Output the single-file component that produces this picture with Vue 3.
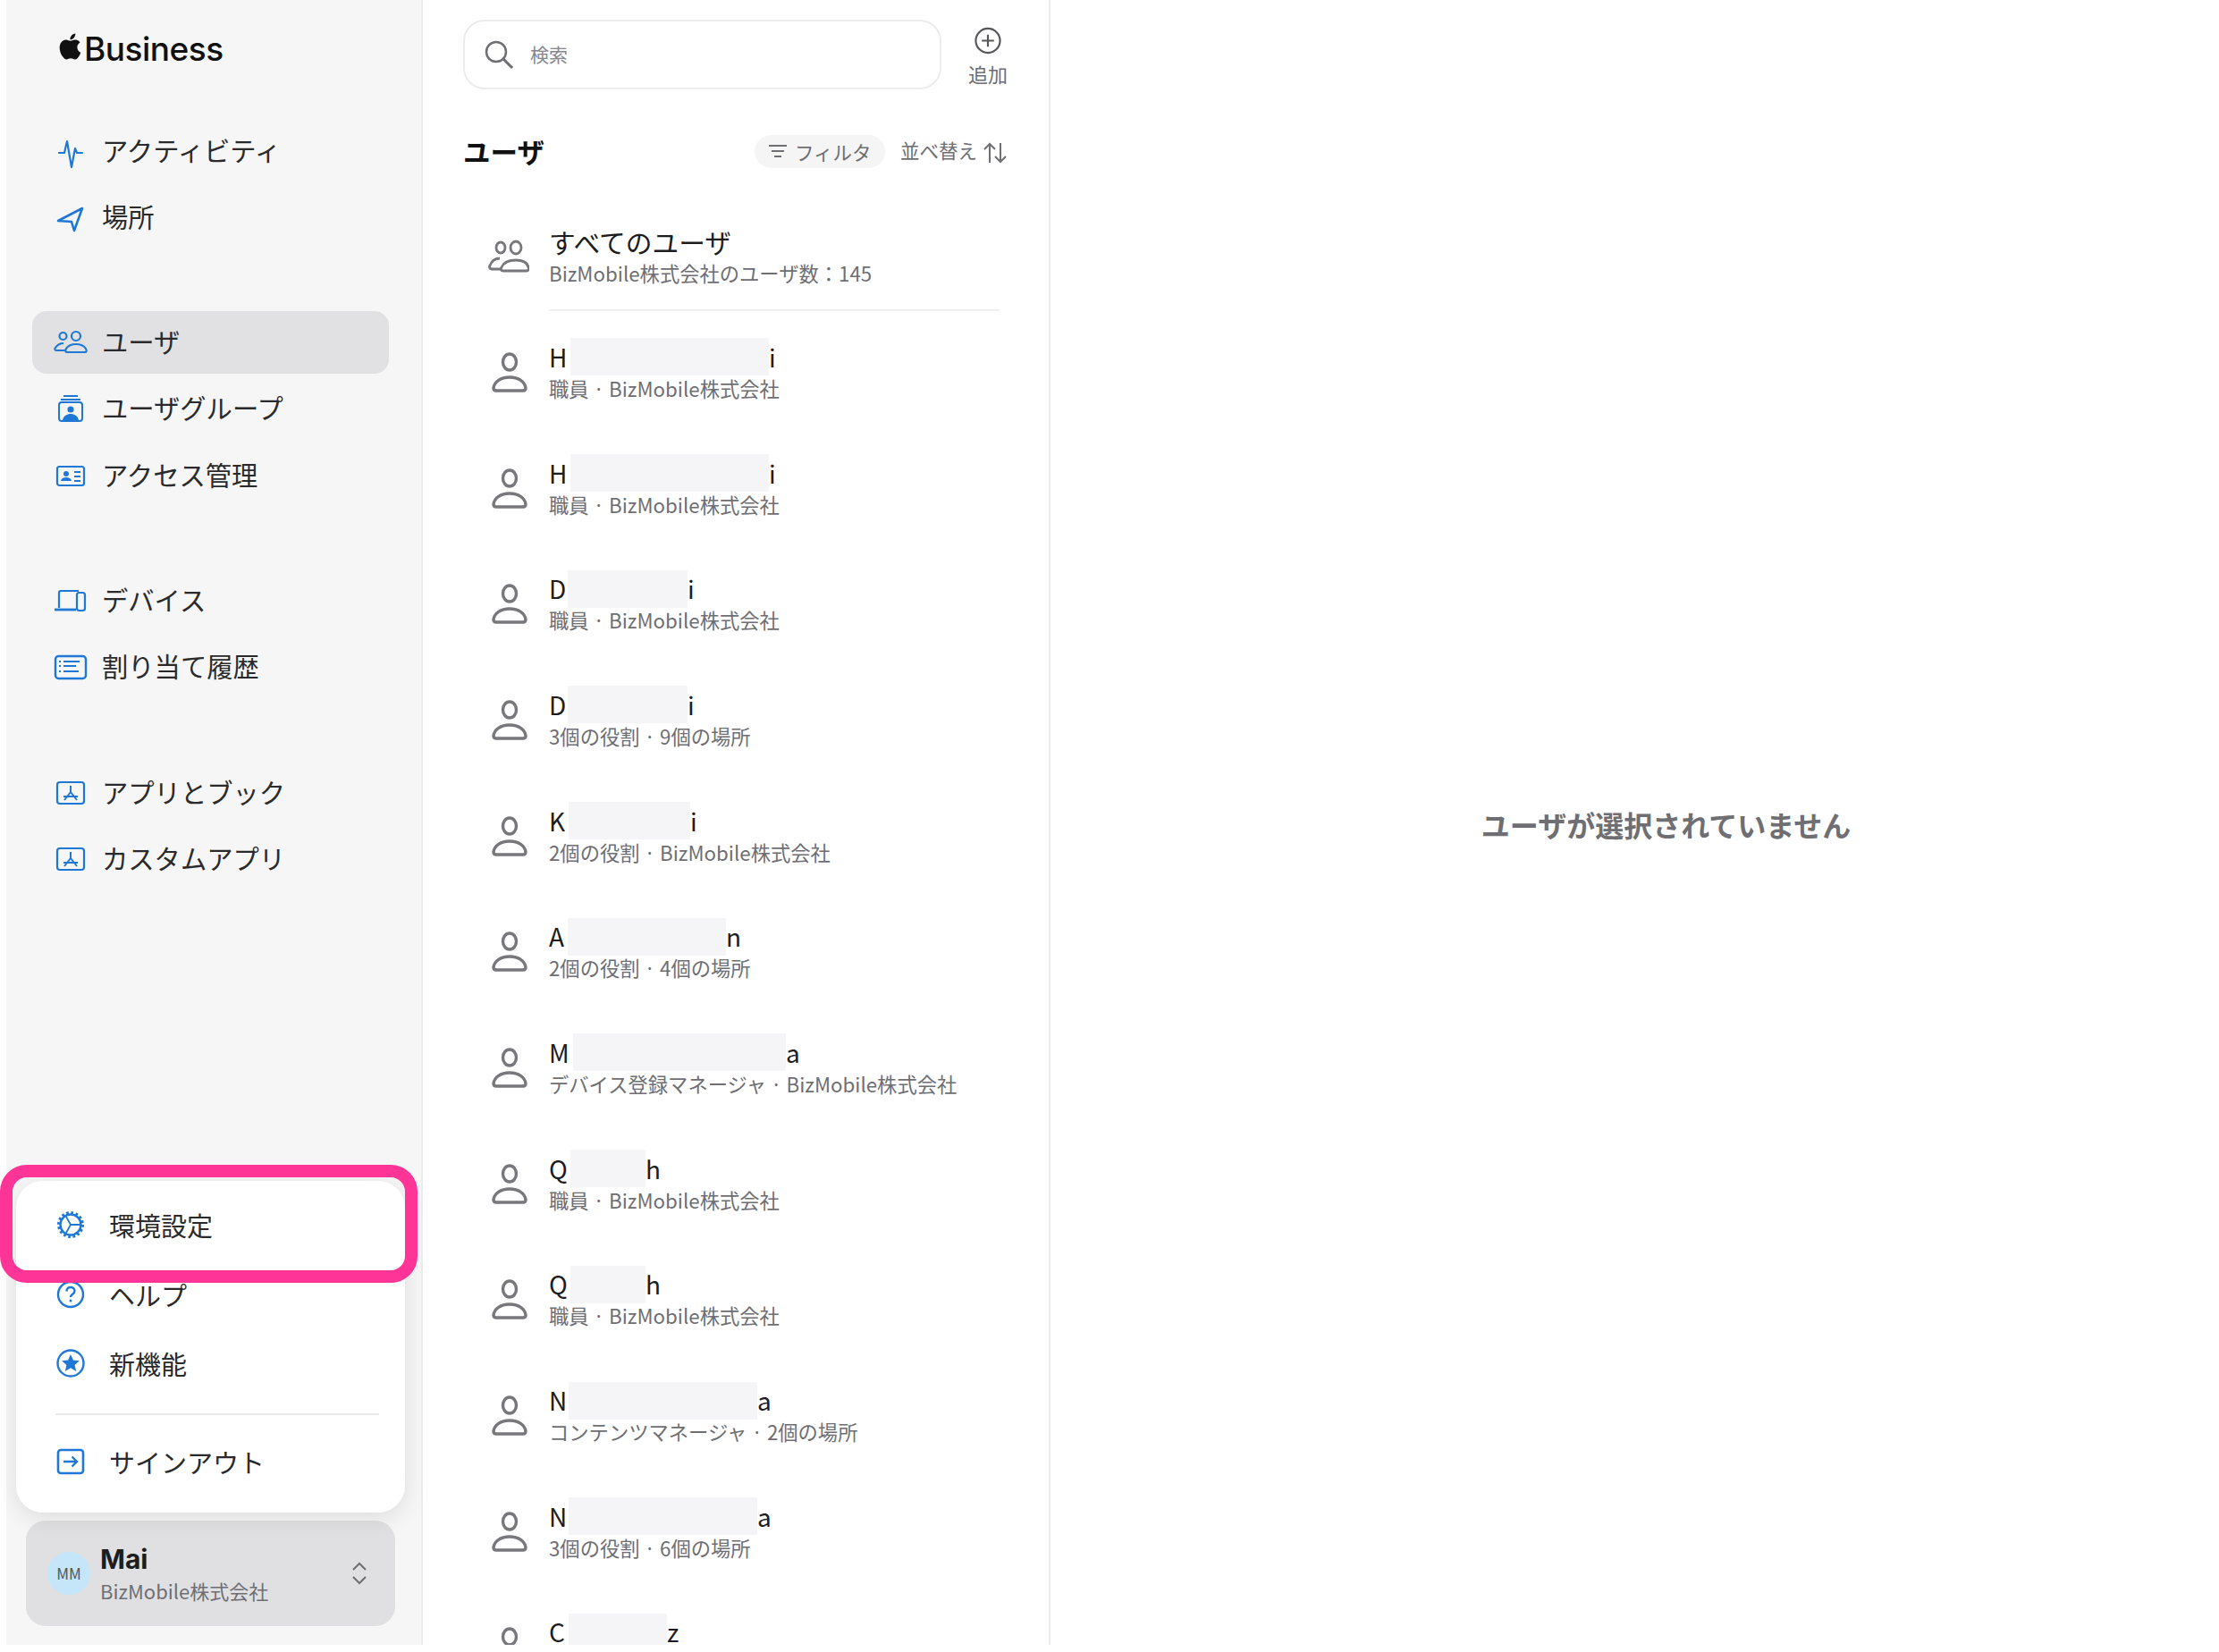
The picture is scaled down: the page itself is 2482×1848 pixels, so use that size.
<script setup>
const groups = [
  [{ t: 'アクティビティ', i: 'activity' }, { t: '場所', i: 'location' }],
  [{ t: 'ユーザ', i: 'users', active: true }, { t: 'ユーザグループ', i: 'group' }, { t: 'アクセス管理', i: 'id' }],
  [{ t: 'デバイス', i: 'device' }, { t: '割り当て履歴', i: 'list' }],
  [{ t: 'アプリとブック', i: 'app' }, { t: 'カスタムアプリ', i: 'app' }],
]
const icons = {
  activity: '<path d="M7 22h6l3-13 5 29 4-21 2 5h6" fill="none" stroke="#1f78d6" stroke-width="2.200" stroke-linejoin="round" stroke-linecap="round"/>',
  location: '<path d="M6 24 33 10 24 35 21 25Z" fill="none" stroke="#1f78d6" stroke-width="2.600" stroke-linejoin="round"/>',
  users: '<g fill="none" stroke="#1f78d6" stroke-width="2.200"><circle cx="11.500" cy="13" r="4"/><circle cx="26" cy="13" r="5"/><path d="M14 29H4c-2 0-2-2-1-3 2-3 5-5 9-5"/><path d="M16 31c-2 0-2-2-1-4 2-3 6-5 11-5s9 2 11 5c1 2 1 4-1 4Z"/></g>',
  group: '<g fill="none" stroke="#1f78d6" stroke-width="2"><path d="M12 6h16M9 10h22"/><rect x="7" y="13" width="26" height="21" rx="3"/></g><circle cx="20" cy="21" r="3.600" fill="#1f78d6"/><path d="M11 33c1-5 5-7 9-7s8 2 9 7Z" fill="#1f78d6"/>',
  id: '<rect x="5" y="10" width="30" height="21" rx="2.500" fill="none" stroke="#1f78d6" stroke-width="2.200"/><circle cx="15" cy="18" r="3" fill="#1f78d6"/><path d="M9 26c.5-3 3-4 6-4s5.500 1 6 4Z" fill="#1f78d6"/><path d="M24 16h7M24 21h7M24 26h7" stroke="#1f78d6" stroke-width="1.800"/>',
  device: '<g fill="none" stroke="#1f78d6" stroke-width="2.200"><path d="M7 28V11c0-1 1-2 2-2h20"/><path d="M2 30h24" stroke-width="2.800"/><rect x="27" y="11" width="9" height="20" rx="2.500"/></g>',
  list: '<rect x="3" y="8" width="34" height="25" rx="3.500" fill="none" stroke="#1f78d6" stroke-width="2.400"/><path d="M7 14h2M7 19h2M7 25h2M12 14h18M12 19h14M12 25h17" stroke="#1f78d6" stroke-width="2.200"/>',
  app: '<rect x="5" y="8" width="30" height="24" rx="3" fill="none" stroke="#1f78d6" stroke-width="2.200"/><path d="M20 12v7M20 19l-7 9M20 19l7 9M12 24h16" stroke="#1f78d6" stroke-width="2" fill="none"/>',
  gear: '<circle cx="20" cy="20" r="11.500" fill="none" stroke="#1f78d6" stroke-width="2.400"/><circle cx="20" cy="20" r="13.500" fill="none" stroke="#1f78d6" stroke-width="3" stroke-dasharray="2.700 2.600"/><path d="M15 11l5 9-5 9M20 20h11" fill="none" stroke="#1f78d6" stroke-width="1.800"/>',
  help: '<circle cx="20" cy="20" r="14" fill="none" stroke="#1f78d6" stroke-width="2.400"/><path d="M15.500 16.500c0-3 2-4.500 4.500-4.500s4.500 1.500 4.500 4c0 4-4.500 3.500-4.500 7" fill="none" stroke="#1f78d6" stroke-width="2.400"/><circle cx="20" cy="27" r="1.500" fill="#1f78d6"/>',
  star: '<circle cx="20" cy="20" r="14.500" fill="none" stroke="#1f78d6" stroke-width="2.400"/><path d="m20 10 2.900 6.500 7 .7-5.300 4.700 1.600 7L20 25.200l-6.200 3.700 1.600-7-5.300-4.700 7-.7Z" fill="#1f78d6"/>',
  signout: '<rect x="6" y="7" width="28" height="26" rx="3" fill="none" stroke="#1f78d6" stroke-width="2.600"/><path d="M12 20h15M21.500 14.500 27 20l-5.500 5.500" fill="none" stroke="#1f78d6" stroke-width="2.400"/>',
}
const menu = [
  { t: '環境設定', i: 'gear' },
  { t: 'ヘルプ', i: 'help' },
  { t: '新機能', i: 'star' },
]
const users = [
  { a: 'H', z: 'i', l: 24, w: 222, s: '職員 · BizMobile株式会社' },
  { a: 'H', z: 'i', l: 24, w: 222, s: '職員 · BizMobile株式会社' },
  { a: 'D', z: 'i', l: 21, w: 134, s: '職員 · BizMobile株式会社' },
  { a: 'D', z: 'i', l: 21, w: 134, s: '3個の役割 · 9個の場所' },
  { a: 'K', z: 'i', l: 22, w: 136, s: '2個の役割 · BizMobile株式会社' },
  { a: 'A', z: 'n', l: 21, w: 177, s: '2個の役割 · 4個の場所' },
  { a: 'M', z: 'a', l: 27, w: 238, s: 'デバイス登録マネージャ · BizMobile株式会社' },
  { a: 'Q', z: 'h', l: 24, w: 84, s: '職員 · BizMobile株式会社' },
  { a: 'Q', z: 'h', l: 24, w: 84, s: '職員 · BizMobile株式会社' },
  { a: 'N', z: 'a', l: 22, w: 211, s: 'コンテンツマネージャ · 2個の場所' },
  { a: 'N', z: 'a', l: 22, w: 211, s: '3個の役割 · 6個の場所' },
  { a: 'C', z: 'z', l: 22, w: 110, s: '' },
]
</script>

<template>
  <div class="app">
    <aside class="side">
      <div class="brand">
        <svg class="apple" viewBox="0 0 24 24"><path d="M12.152 6.896c-.948 0-2.415-1.078-3.960-1.040-2.040.027-3.910 1.183-4.961 3.014-2.117 3.675-.546 9.103 1.519 12.090 1.013 1.454 2.208 3.090 3.792 3.039 1.520-.065 2.090-.987 3.935-.987 1.831 0 2.350.987 3.960.948 1.637-.026 2.676-1.480 3.676-2.948 1.156-1.688 1.636-3.325 1.662-3.415-.039-.013-3.182-1.221-3.220-4.857-.026-3.040 2.480-4.494 2.597-4.559-1.429-2.090-3.623-2.324-4.390-2.376-2-.156-3.675 1.090-4.610 1.090zM15.530 3.830c.843-1.012 1.400-2.427 1.245-3.830-1.207.052-2.662.805-3.532 1.818-.780.896-1.454 2.338-1.273 3.714 1.338.104 2.715-.688 3.559-1.701"/></svg>
        <span>Business</span>
      </div>
      <nav v-for="(g, gi) in groups" :key="gi" class="group">
        <div v-for="it in g" :key="it.t" class="item" :class="{ active: it.active }">
          <svg class="ic" viewBox="0 0 40 40" v-html="icons[it.i]"></svg>
          <span>{{ it.t }}</span>
        </div>
      </nav>

      <div class="bottom">
        <div class="menu">
          <div v-for="m in menu" :key="m.t" class="mrow">
            <svg class="ic" viewBox="0 0 40 40" v-html="icons[m.i]"></svg>
            <span>{{ m.t }}</span>
          </div>
          <div class="mdiv"></div>
          <div class="mrow last">
            <svg class="ic" viewBox="0 0 40 40" v-html="icons.signout"></svg>
            <span>サインアウト</span>
          </div>
          <div class="pink"></div>
        </div>
        <div class="account">
          <div class="avatar">MM</div>
          <div class="who">
            <div class="mai">Mai</div>
            <div class="org">BizMobile株式会社</div>
          </div>
          <svg class="updown" viewBox="0 0 20 30"><path d="M3 11 10 4l7 7M3 19l7 7 7-7" fill="none" stroke="#6e6e73" stroke-width="2"/></svg>
        </div>
      </div>
    </aside>

    <section class="list">
      <div class="top">
        <div class="search">
          <svg class="sicon" viewBox="0 0 34 34"><circle cx="14" cy="14" r="11" fill="none" stroke="#6e6e73" stroke-width="2.500"/><path d="m22 22 10 10" stroke="#6e6e73" stroke-width="3"/></svg>
          <span>検索</span>
        </div>
        <div class="add">
          <svg viewBox="0 0 32 32"><circle cx="16" cy="16" r="14" fill="none" stroke="#55555a" stroke-width="2.200"/><path d="M16 9v14M9 16h14" stroke="#55555a" stroke-width="2.200"/></svg>
          <span>追加</span>
        </div>
      </div>
      <div class="head">
        <h2>ユーザ</h2>
        <div class="pill">
          <svg viewBox="0 0 24 20"><path d="M2 4h20M5 10h14M8 16h8" stroke="#6e6e73" stroke-width="2"/></svg>
          <span>フィルタ</span>
        </div>
        <div class="sort">
          <span>並べ替え</span>
          <svg viewBox="0 0 28 26"><path d="M8 24V3M2 9l6-6 6 6M20 2v21M14 17l6 6 6-6" fill="none" stroke="#6e6e73" stroke-width="2"/></svg>
        </div>
      </div>
      <div class="urow all">
        <svg class="uic" viewBox="0 0 46 46"><g fill="none" stroke="#77777c" stroke-width="2.800"><ellipse cx="14" cy="12" rx="5" ry="6"/><ellipse cx="31" cy="12" rx="6" ry="7"/><path d="M14 36H4c-2 0-3-2-2-4 2-5 6-8 11-8"/><path d="M17 38c-3 0-3-2-2-4 2-5 8-8 16-8s13 3 14 8c1 2 0 4-2 4Z"/></g></svg>
        <div class="txt">
          <div class="title">すべてのユーザ</div>
          <div class="sub">BizMobile株式会社のユーザ数：145</div>
        </div>
      </div>
      <div class="rows">
        <div v-for="(u, i) in users" :key="i" class="urow">
          <svg class="uic" viewBox="0 0 46 46"><g fill="none" stroke="#77777c" stroke-width="3.400"><ellipse cx="24" cy="11" rx="7.500" ry="9"/><path d="M9 43c-2 0-3-1-3-3 1-7 8-12 18-12s17 5 18 12c0 2-1 3-3 3Z"/></g></svg>
          <div class="txt">
            <div class="name">
              <span class="first" :style="{ width: u.l + 'px' }">{{ u.a }}</span>
              <span class="mask" :style="{ width: u.w + 'px' }"></span>
              <span>{{ u.z }}</span>
            </div>
            <div class="sub">{{ u.s }}</div>
          </div>
        </div>
      </div>
    </section>

    <main class="detail">ユーザが選択されていません</main>
  </div>
</template>

<style>
html, body { background: #fff; overflow: hidden; }
</style>

<style scoped>
.app {
  display: flex;
  width: 2482px;
  height: 1840px;
  padding-left: 7px;
  box-sizing: border-box;
  font-family: "Noto Sans CJK JP", "Noto Sans", sans-serif;
  color: #1d1d1f;
  background: #fff;
}
.side {
  width: 466px;
  flex: none;
  box-sizing: border-box;
  background: #f6f6f6;
  border-right: 2px solid #ececee;
  display: flex;
  flex-direction: column;
  padding: 0 0 21.500px;
}
.brand {
  display: flex;
  align-items: center;
  height: 108px;
  padding-left: 57px;
  font-family: Inter, sans-serif;
  font-weight: 500;
  font-size: 37px;
  letter-spacing: -.5px;
  color: #111;
}
.apple { width: 29px; height: 32px; margin-right: 1px; fill: #111; margin-top: -5px; }
.group {
  display: flex;
  flex-direction: column;
  gap: 4.300px;
  margin: 0 0 70.300px 29px;
  width: 399px;
}
.group:first-of-type { margin-top: 25.500px; }
.item {
  height: 70px;
  display: flex;
  align-items: center;
  padding-left: 23px;
  gap: 15px;
  font-size: 29.300px;
  border-radius: 16px;
  color: #2a2a2c;
}
.item > span { margin-top: -4px; }
.item.active { background: #e1e1e3; }
.ic { width: 40px; height: 40px; flex: none; }
.bottom { margin-top: auto; }
.menu {
  position: relative;
  margin-left: 11px;
  width: 435px;
  height: 371px;
  box-sizing: border-box;
  padding-top: 11px;
  background: #fff;
  border-radius: 30px;
  box-shadow: 0 6px 26px rgba(0, 0, 0, .1);
}
.mrow {
  height: 77.500px;
  display: flex;
  align-items: center;
  padding-left: 41px;
  gap: 23px;
  font-size: 29px;
  color: #2a2a2c;
}
.mdiv { height: 2px; background: #e9e9eb; margin: 17px 29px 17px 44px; }
.mrow.last { height: 70px; }
.pink {
  position: absolute;
  left: -18px;
  top: -18px;
  width: 467px;
  height: 132px;
  box-sizing: border-box;
  border: 14px solid #fe3596;
  border-radius: 30px;
}
.account {
  margin: 9px 0 0 22px;
  width: 413px;
  height: 118px;
  box-sizing: border-box;
  border-radius: 22px;
  background: #e0e0e2;
  display: flex;
  align-items: center;
  padding: 0 30px 0 24px;
}
.avatar {
  width: 48px;
  height: 48px;
  border-radius: 50%;
  background: #c5e6f9;
  color: #55555a;
  font-size: 17px;
  line-height: 48px;
  text-align: center;
  flex: none;
}
.who { margin-left: 11px; flex: 1; padding-top: 2px; }
.mai { font-size: 30px; font-weight: 700; line-height: 36px; font-family: Inter, sans-serif; }
.org { font-size: 22px; line-height: 34px; color: #6e6e73; }
.updown { width: 20px; height: 30px; }

.list {
  width: 702px;
  flex: none;
  box-sizing: border-box;
  border-right: 2px solid #ececee;
  padding-top: 22px;
  overflow: hidden;
}
.top { display: flex; margin-left: 45px; height: 78px; }
.search {
  width: 535px;
  height: 78px;
  box-sizing: border-box;
  border: 2px solid #ececee;
  border-radius: 24px;
  display: flex;
  align-items: center;
  padding-left: 21px;
  font-size: 21px;
  color: #86868b;
  gap: 18px;
}
.search span { margin-top: -3px; }
.add {
  width: 104px;
  display: flex;
  flex-direction: column;
  align-items: center;
  font-size: 22px;
  line-height: 36px;
  color: #6e6e73;
}
.add svg { width: 32px; height: 32px; margin: 8px 0 3px; }
.sicon { width: 34px; height: 34px; }
.head {
  display: flex;
  align-items: center;
  margin: 50px 0 0 45px;
  height: 38px;
  width: 609px;
}
.head h2 { margin: 0 auto 0 0; font-size: 30.500px; font-weight: 700; color: #111; }
.pill {
  width: 146px;
  height: 37px;
  box-sizing: border-box;
  border-radius: 19px;
  background: #f5f5f5;
  display: flex;
  align-items: center;
  padding-left: 14px;
  gap: 7px;
  font-size: 21.500px;
  color: #6e6e73;
}
.pill svg { width: 24px; height: 20px; }
.sort {
  display: flex;
  align-items: center;
  margin-left: 17px;
  gap: 6px;
  font-size: 21.500px;
  color: #6e6e73;
}
.sort span { margin-top: -3px; }
.sort svg { width: 28px; height: 26px; margin-top: 3px; }
.urow {
  display: flex;
  align-items: center;
  height: 129.700px;
  margin-left: 46px;
}
.urow.all {
  height: 120.500px;
  margin-top: 39.500px;
  position: relative;
}
.urow.all::after {
  content: "";
  position: absolute;
  left: 95px;
  right: 55px;
  bottom: 0;
  height: 2px;
  background: #f0f0f2;
}
.rows { padding-top: 4px; }
.uic { width: 46px; height: 46px; margin: 0 22px 0 27px; flex: none; }
.txt { line-height: 35px; }
.title { font-size: 29.700px; height: 35px; }
.name {
  display: flex;
  align-items: center;
  height: 35px;
  font-size: 28px;
  color: #1d1d1f;
}
.first { display: block; overflow: visible; white-space: nowrap; }
.mask { display: block; height: 42px; background: #f5f5f7; flex: none; }
.sub { font-size: 22.300px; height: 35px; color: #6e6e73; white-space: nowrap; }
.detail {
  flex: 1;
  display: flex;
  align-items: center;
  justify-content: center;
  font-size: 32px;
  font-weight: 700;
  color: #6e6e73;
  padding-left: 70px;
  height: 1843px;
}
</style>
